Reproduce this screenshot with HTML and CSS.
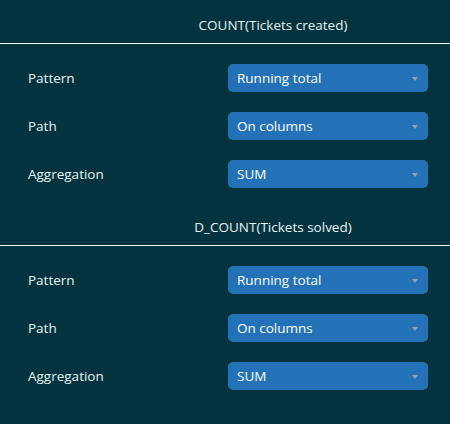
FILE: index.html
```html
<!DOCTYPE html>
<html>
<head>
<meta charset="utf-8">
<link rel="stylesheet" href="styles.css">
</head>
<body>
<div class="panel">
  <section class="group">
    <div class="group-title">COUNT(Tickets created)</div>
    <div class="rows">
      <div class="row"><span class="label">Pattern</span><div class="select"><span>Running total</span><i class="arrow"></i></div></div>
      <div class="row"><span class="label">Path</span><div class="select"><span>On columns</span><i class="arrow"></i></div></div>
      <div class="row"><span class="label">Aggregation</span><div class="select"><span>SUM</span><i class="arrow"></i></div></div>
    </div>
  </section>
  <section class="group">
    <div class="group-title">D_COUNT(Tickets solved)</div>
    <div class="rows">
      <div class="row"><span class="label">Pattern</span><div class="select"><span>Running total</span><i class="arrow"></i></div></div>
      <div class="row"><span class="label">Path</span><div class="select"><span>On columns</span><i class="arrow"></i></div></div>
      <div class="row"><span class="label">Aggregation</span><div class="select"><span>SUM</span><i class="arrow"></i></div></div>
    </div>
  </section>
</div>
</body>
</html>
```
FILE: styles.css
```css
html, body {
  margin: 0;
  padding: 0;
  background: #03333f;
}
body {
  width: 450px;
  height: 424px;
  overflow: hidden;
  font-family: "Open Sans", "Noto Sans", sans-serif;
  font-size: 13.5px;
  color: #e6f3f3;
}
.group {
  height: 202px;
}
.group-title {
  height: 44px;
  box-sizing: border-box;
  padding-left: 96px;
  padding-top: 15px;
  line-height: 20px;
  text-align: center;
  border-bottom: 1px solid #f2f7f7;
}
.rows {
  display: flex;
  flex-direction: column;
  gap: 20px;
  padding-top: 20px;
}
.row {
  display: flex;
  align-items: center;
  justify-content: space-between;
  padding: 0 22px 0 28px;
}
.label {
  line-height: 20px;
}
.select {
  width: 200px;
  height: 28px;
  box-sizing: border-box;
  background: #2372b8;
  border-radius: 5px;
  display: flex;
  align-items: center;
  justify-content: space-between;
  padding: 0 10px 0 9px;
  color: #ffffff;
}
.arrow {
  width: 0;
  height: 0;
  margin-top: 2px;
  border-left: 3px solid transparent;
  border-right: 3px solid transparent;
  border-top: 4px solid #8ea3b4;
}
```
